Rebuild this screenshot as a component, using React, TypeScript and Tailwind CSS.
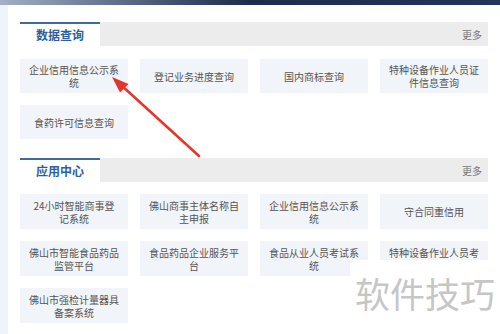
const font = { fontFamily: '"Noto Sans CJK SC", "Noto Sans", sans-serif' }

const dataItems = [
  ["企业信用信息公示系", "统"],
  ["登记业务进度查询"],
  ["国内商标查询"],
  ["特种设备作业人员证", "件信息查询"],
  ["食药许可信息查询"],
]

const appItems = [
  ["24小时智能商事登", "记系统"],
  ["佛山商事主体名称自", "主申报"],
  ["企业信用信息公示系", "统"],
  ["守合同重信用"],
  ["佛山市智能食品药品", "监管平台"],
  ["食品药品企业服务平", "台"],
  ["食品从业人员考试系", "统"],
  ["特种设备作业人员考", ""],
  ["佛山市强检计量器具", "备案系统"],
]

function Header({ title }: { title: string }) {
  return (
    <div className="flex h-[24px]">
      <div className="flex w-[80px] items-center justify-center border-t-2 border-[#3f6a9c] bg-white text-[12px] font-bold text-[#2d5f9e]">
        {title}
      </div>
      <div className="flex flex-1 items-center justify-end bg-[#ececec] pr-[6px] text-[10px] text-[#777]">
        更多
      </div>
    </div>
  )
}

function Item({ lines, h }: { lines: string[]; h: string }) {
  return (
    <div className={`flex flex-col items-center justify-center bg-[#f1f4f8] text-[10px] leading-[13px] text-[#555] ${h}`}>
      {lines.map((l, i) => (
        <span key={i} className="block h-[13px] overflow-hidden">
          {l}
        </span>
      ))}
    </div>
  )
}

export default function App() {
  return (
    <div className="relative h-[334px] w-[500px] overflow-hidden bg-white" style={font}>
      <div className="h-[5px] bg-gradient-to-r from-[#a4b0c4] via-[#1d2b4c] to-[#24345a]" />
      <div className="flex h-[329px]">
        <div className="w-[8px] bg-[#eef4fb]" />
        <div className="flex-1 pl-[12px] pr-[12px] pt-[17px]">
          <Header title="数据查询" />
          <div className="mt-[13px] grid grid-cols-4 gap-x-[12px] gap-y-[12px]">
            {dataItems.map((it, i) => (
              <Item key={i} lines={it} h="h-[34px]" />
            ))}
          </div>
          <div className="mt-[19px]">
            <Header title="应用中心" />
          </div>
          <div className="mt-[12px] grid grid-cols-4 gap-x-[12px] gap-y-[12px]">
            {appItems.map((it, i) => (
              <Item key={i} lines={it} h="h-[35px]" />
            ))}
          </div>
        </div>
      </div>

      {/* watermark patch */}
      <div className="absolute left-[350px] top-[260px] h-[74px] w-[150px] bg-white">
        <div className="mt-[13px] pl-[5px] text-[35px] leading-[40px] text-[#c6c6c6]">
          软件技巧
        </div>
      </div>

      {/* red arrow */}
      <svg className="absolute left-0 top-0" width="500" height="334" viewBox="0 0 500 334">
        <line x1="199" y1="156" x2="121" y2="85" stroke="#e3352b" strokeWidth="2.5" strokeLinecap="round" />
        <polygon points="112,77 128.5,84 120,92.5" fill="#e3352b" />
      </svg>
    </div>
  )
}
